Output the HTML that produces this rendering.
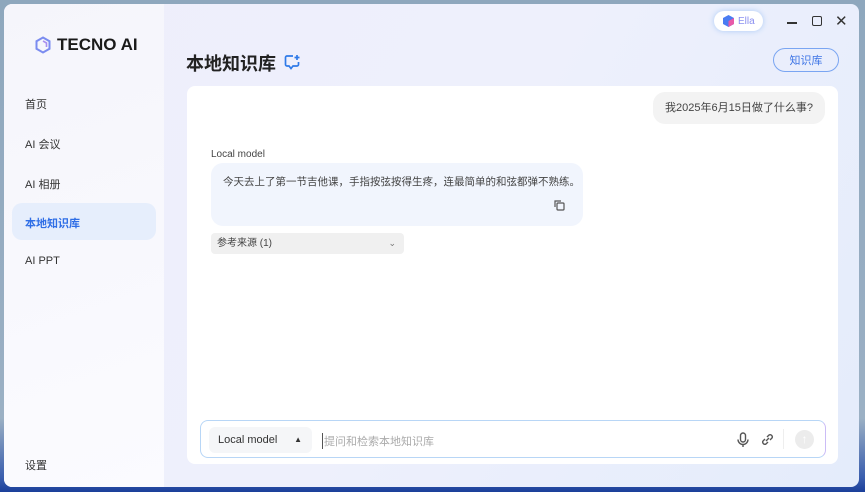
<!DOCTYPE html>
<html><head><meta charset="utf-8"><style>
*{margin:0;padding:0;box-sizing:border-box}
body{width:865px;height:492px;overflow:hidden;background:linear-gradient(180deg,#8ea7bd 0%,#9bb0c4 85%,#3a5eae 97%,#1b3f9a 100%);font-family:"Liberation Sans","Noto Sans CJK SC",sans-serif;position:relative}
.win{position:absolute;left:4px;top:4px;width:855px;height:483px;border-radius:8px;overflow:hidden;background:linear-gradient(120deg,#eeeefb 0%,#eef0fc 50%,#e4ecfb 100%)}
.side{position:absolute;left:0;top:0;width:160px;height:100%;background:linear-gradient(160deg,#f5f5fb,#fbfbff)}
.logo{position:absolute;left:30px;top:31px;display:flex;align-items:center;font-weight:bold;font-size:17px;color:#1a1a1a}
.nav{position:absolute;left:21px;font-size:11px;color:#333}
.act{position:absolute;left:8px;top:199px;width:144px;height:37px;border-radius:10px;background:#e6eefc}
.title{position:absolute;left:182px;top:46px;font-size:18px;font-weight:bold;color:#222}
.card{position:absolute;left:183px;top:82px;width:651px;height:378px;background:#fff;border-radius:8px}
.kb{position:absolute;left:769px;top:44px;width:66px;height:24px;border:1.5px solid #7aa5f2;border-radius:12px;color:#3d74e6;font-size:11px;display:flex;align-items:center;justify-content:center}
.ella{position:absolute;left:710px;top:7px;width:49px;height:20px;border-radius:10px;background:#fff;box-shadow:0 0 6px #aacaf7;font-size:10px;color:#8a8ff0;display:flex;align-items:center;padding-left:24px}
</style></head><body>
<div class="win">
<div class="side">
<div class="logo"><svg width="18" height="18" viewBox="0 0 18 18"><path d="M9 1.5L15.5 5.2V12.8L9 16.5L2.5 12.8V5.2Z" fill="none" stroke="#7b8cf0" stroke-width="2"/><path d="M9 5L12.5 7V11" fill="none" stroke="#a98ff0" stroke-width="1.6"/></svg><span style="margin-left:5px">TECNO AI</span></div>
<div class="act"></div>
<div class="nav" style="top:92px">首页</div>
<div class="nav" style="top:132px">AI 会议</div>
<div class="nav" style="top:172px">AI 相册</div>
<div class="nav" style="top:211px;color:#2f6ee6;font-weight:bold">本地知识库</div>
<div class="nav" style="top:251px">AI PPT</div>
<div class="nav" style="top:453px">设置</div>
</div>
<div class="title">本地知识库</div>
<svg style="position:absolute;left:280px;top:50px" width="17" height="16" viewBox="0 0 17 16"><path d="M9 2H3a1.5 1.5 0 0 0-1.5 1.5v7A1.5 1.5 0 0 0 3 12h2l2 2.5 2-2.5h4a1.5 1.5 0 0 0 1.5-1.5V8" fill="none" stroke="#2f7ae8" stroke-width="1.7"/><path d="M13 1v5M10.5 3.5h5" stroke="#2f7ae8" stroke-width="1.7"/></svg>
<div class="ella"><svg style="position:absolute;left:9px;top:4px" width="11" height="12" viewBox="0 0 11 12"><path d="M5.5 0L11 3V9L5.5 12L0 9V3Z" fill="#4a7cf2"/><path d="M5.5 6L11 3V9L5.5 12Z" fill="#e85aa8"/></svg>Ella</div>
<div style="position:absolute;left:783px;top:18px;width:10px;height:1.5px;background:#333"></div>
<div style="position:absolute;left:808px;top:12px;width:10px;height:10px;border:1.5px solid #333;border-radius:2px"></div>
<div style="position:absolute;left:831px;top:8px;font-size:15px;color:#333">✕</div>
<div class="kb">知识库</div>
<div class="card">
<div style="position:absolute;left:466px;top:6px;width:172px;height:32px;border-radius:12px;background:#f3f3f3;font-size:11px;color:#444;line-height:32px;text-align:center">我2025年6月15日做了什么事?</div>
<div style="position:absolute;left:24px;top:63px;font-size:10px;color:#444">Local model</div>
<div style="position:absolute;left:24px;top:77px;width:372px;height:63px;border-radius:12px;background:#f1f5fd">
<div style="position:absolute;left:12px;top:11px;font-size:10.5px;color:#444">今天去上了第一节吉他课，手指按弦按得生疼，连最简单的和弦都弹不熟练。</div>
<svg style="position:absolute;left:342px;top:36px" width="13" height="13" viewBox="0 0 13 13" fill="none" stroke="#555" stroke-width="1.2"><rect x="4" y="4" width="7" height="7" rx="1"/><path d="M2 8V2h6"/></svg>
</div>
<div style="position:absolute;left:24px;top:147px;width:193px;height:21px;border-radius:4px;background:#f0f0f0;font-size:10px;color:#444;line-height:21px;padding-left:6px">参考来源 (1)<span style="position:absolute;right:8px;top:0;font-size:9px;color:#777">⌄</span></div>
</div>
<div style="position:absolute;left:196px;top:416px;width:626px;height:38px;border-radius:8px;border:1.5px solid #b8d6f6;border-right-color:#cbbcf6;background:#fff">
<div style="position:absolute;left:8px;top:6px;width:103px;height:26px;border-radius:6px;background:#f5f6f8;font-size:11px;color:#333;line-height:26px;padding-left:9px">Local model<span style="position:absolute;right:10px;font-size:8px">▲</span></div>
<div style="position:absolute;left:121px;top:12px;font-size:11px;color:#aaa;border-left:1px solid #555;padding-left:1px">提问和检索本地知识库</div>
<svg style="position:absolute;left:536px;top:11px" width="12" height="16" viewBox="0 0 12 16" fill="none" stroke="#555" stroke-width="1.4"><rect x="3.5" y="1" width="5" height="9" rx="2.5"/><path d="M1 7.5a5 5 0 0 0 10 0M6 12.5V15"/></svg>
<svg style="position:absolute;left:559px;top:11px" width="15" height="15" viewBox="0 0 15 15" fill="none" stroke="#555" stroke-width="1.4"><path d="M6 9l3-3M5 7L3 9a2.2 2.2 0 0 0 3 3l2-2M10 8l2-2a2.2 2.2 0 0 0-3-3L7 5"/></svg>
<div style="position:absolute;left:582px;top:8px;width:1px;height:20px;background:#eee"></div>
<div style="position:absolute;left:594px;top:9px;width:19px;height:19px;border-radius:50%;background:#ececec;color:#fff;font-size:12px;text-align:center;line-height:19px">↑</div>
</div>
</div>
</body></html>
